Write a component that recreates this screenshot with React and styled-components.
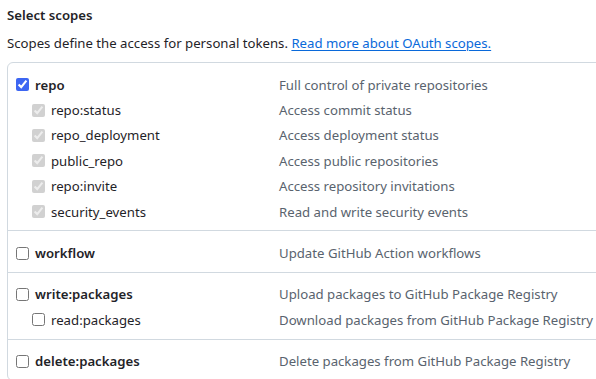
import React from "react";
import styled, { createGlobalStyle } from "styled-components";

const GlobalStyle = createGlobalStyle`
  html, body {
    margin: 0;
    padding: 0;
    background: #ffffff;
    overflow: hidden;
  }
  body {
    font-family: "Noto Sans", "Open Sans", "Liberation Sans", sans-serif;
    color: #1f2328;
  }
`;

const scopes = [
  {
    name: "repo",
    description: "Full control of private repositories",
    checked: true,
    children: [
      { name: "repo:status", description: "Access commit status" },
      { name: "repo_deployment", description: "Access deployment status" },
      { name: "public_repo", description: "Access public repositories" },
      { name: "repo:invite", description: "Access repository invitations" },
      { name: "security_events", description: "Read and write security events" },
    ],
  },
  { name: "workflow", description: "Update GitHub Action workflows", children: [] },
  {
    name: "write:packages",
    description: "Upload packages to GitHub Package Registry",
    children: [
      {
        name: "read:packages",
        description: "Download packages from GitHub Package Registry",
        own: true,
      },
    ],
  },
  {
    name: "delete:packages",
    description: "Delete packages from GitHub Package Registry",
    children: [],
  },
];

const App = () => {
  return (
    <Page>
      <GlobalStyle />
      <Heading>Select scopes</Heading>
      <Intro>
        Scopes define the access for personal tokens.{" "}
        <Link href="#">Read more about OAuth scopes.</Link>
      </Intro>
      <ScopeBox>
        {scopes.map((scope) => (
          <Group key={scope.name}>
            <Row>
              <LabelCell>
                <Checkbox type="checkbox" defaultChecked={scope.checked} />
                <ScopeName $main>{scope.name}</ScopeName>
              </LabelCell>
              <Description>{scope.description}</Description>
            </Row>
            {scope.children.map((child) => (
              <Row key={child.name}>
                <LabelCell $nested>
                  {child.own ? (
                    <Checkbox type="checkbox" />
                  ) : (
                    <Checkbox type="checkbox" checked disabled readOnly />
                  )}
                  <ScopeName>{child.name}</ScopeName>
                </LabelCell>
                <Description>{child.description}</Description>
              </Row>
            ))}
          </Group>
        ))}
      </ScopeBox>
    </Page>
  );
};

export default App;

const Page = styled.div`
  padding: 5px 0 0 7px;
`;

const Heading = styled.h3`
  margin: 0;
  font-size: 13.2px;
  font-weight: 600;
  line-height: 20px;
  color: #1f2328;
`;

const Intro = styled.p`
  margin: 8px 0 0;
  font-size: 13.2px;
  line-height: 20px;
  color: #1f2328;
`;

const Link = styled.a`
  color: #0969da;
  text-decoration: underline;
  text-underline-offset: 2px;
`;

const ScopeBox = styled.div`
  margin-top: 9px;
  width: 640px;
  border: 1px solid #d1d9e0;
  border-radius: 6px;
`;

const Group = styled.div`
  padding: 9px 0 6px;
  border-top: 1px solid #d1d9e0;

  &:first-child {
    border-top: none;
  }
`;

const Row = styled.div`
  display: flex;
  align-items: center;
  height: 25.4px;
`;

const LabelCell = styled.label`
  display: flex;
  align-items: center;
  width: 271px;
  padding-left: ${(p) => (p.$nested ? "24px" : "8px")};
  box-sizing: border-box;
  gap: 6px;
`;

const Checkbox = styled.input`
  width: 13px;
  height: 13px;
  margin: 0;
  accent-color: #3d66f2;
`;

const ScopeName = styled.span`
  font-size: 13.2px;
  font-weight: ${(p) => (p.$main ? 600 : 400)};
  color: #1f2328;
`;

const Description = styled.span`
  font-size: 13.2px;
  color: #59636e;
`;
